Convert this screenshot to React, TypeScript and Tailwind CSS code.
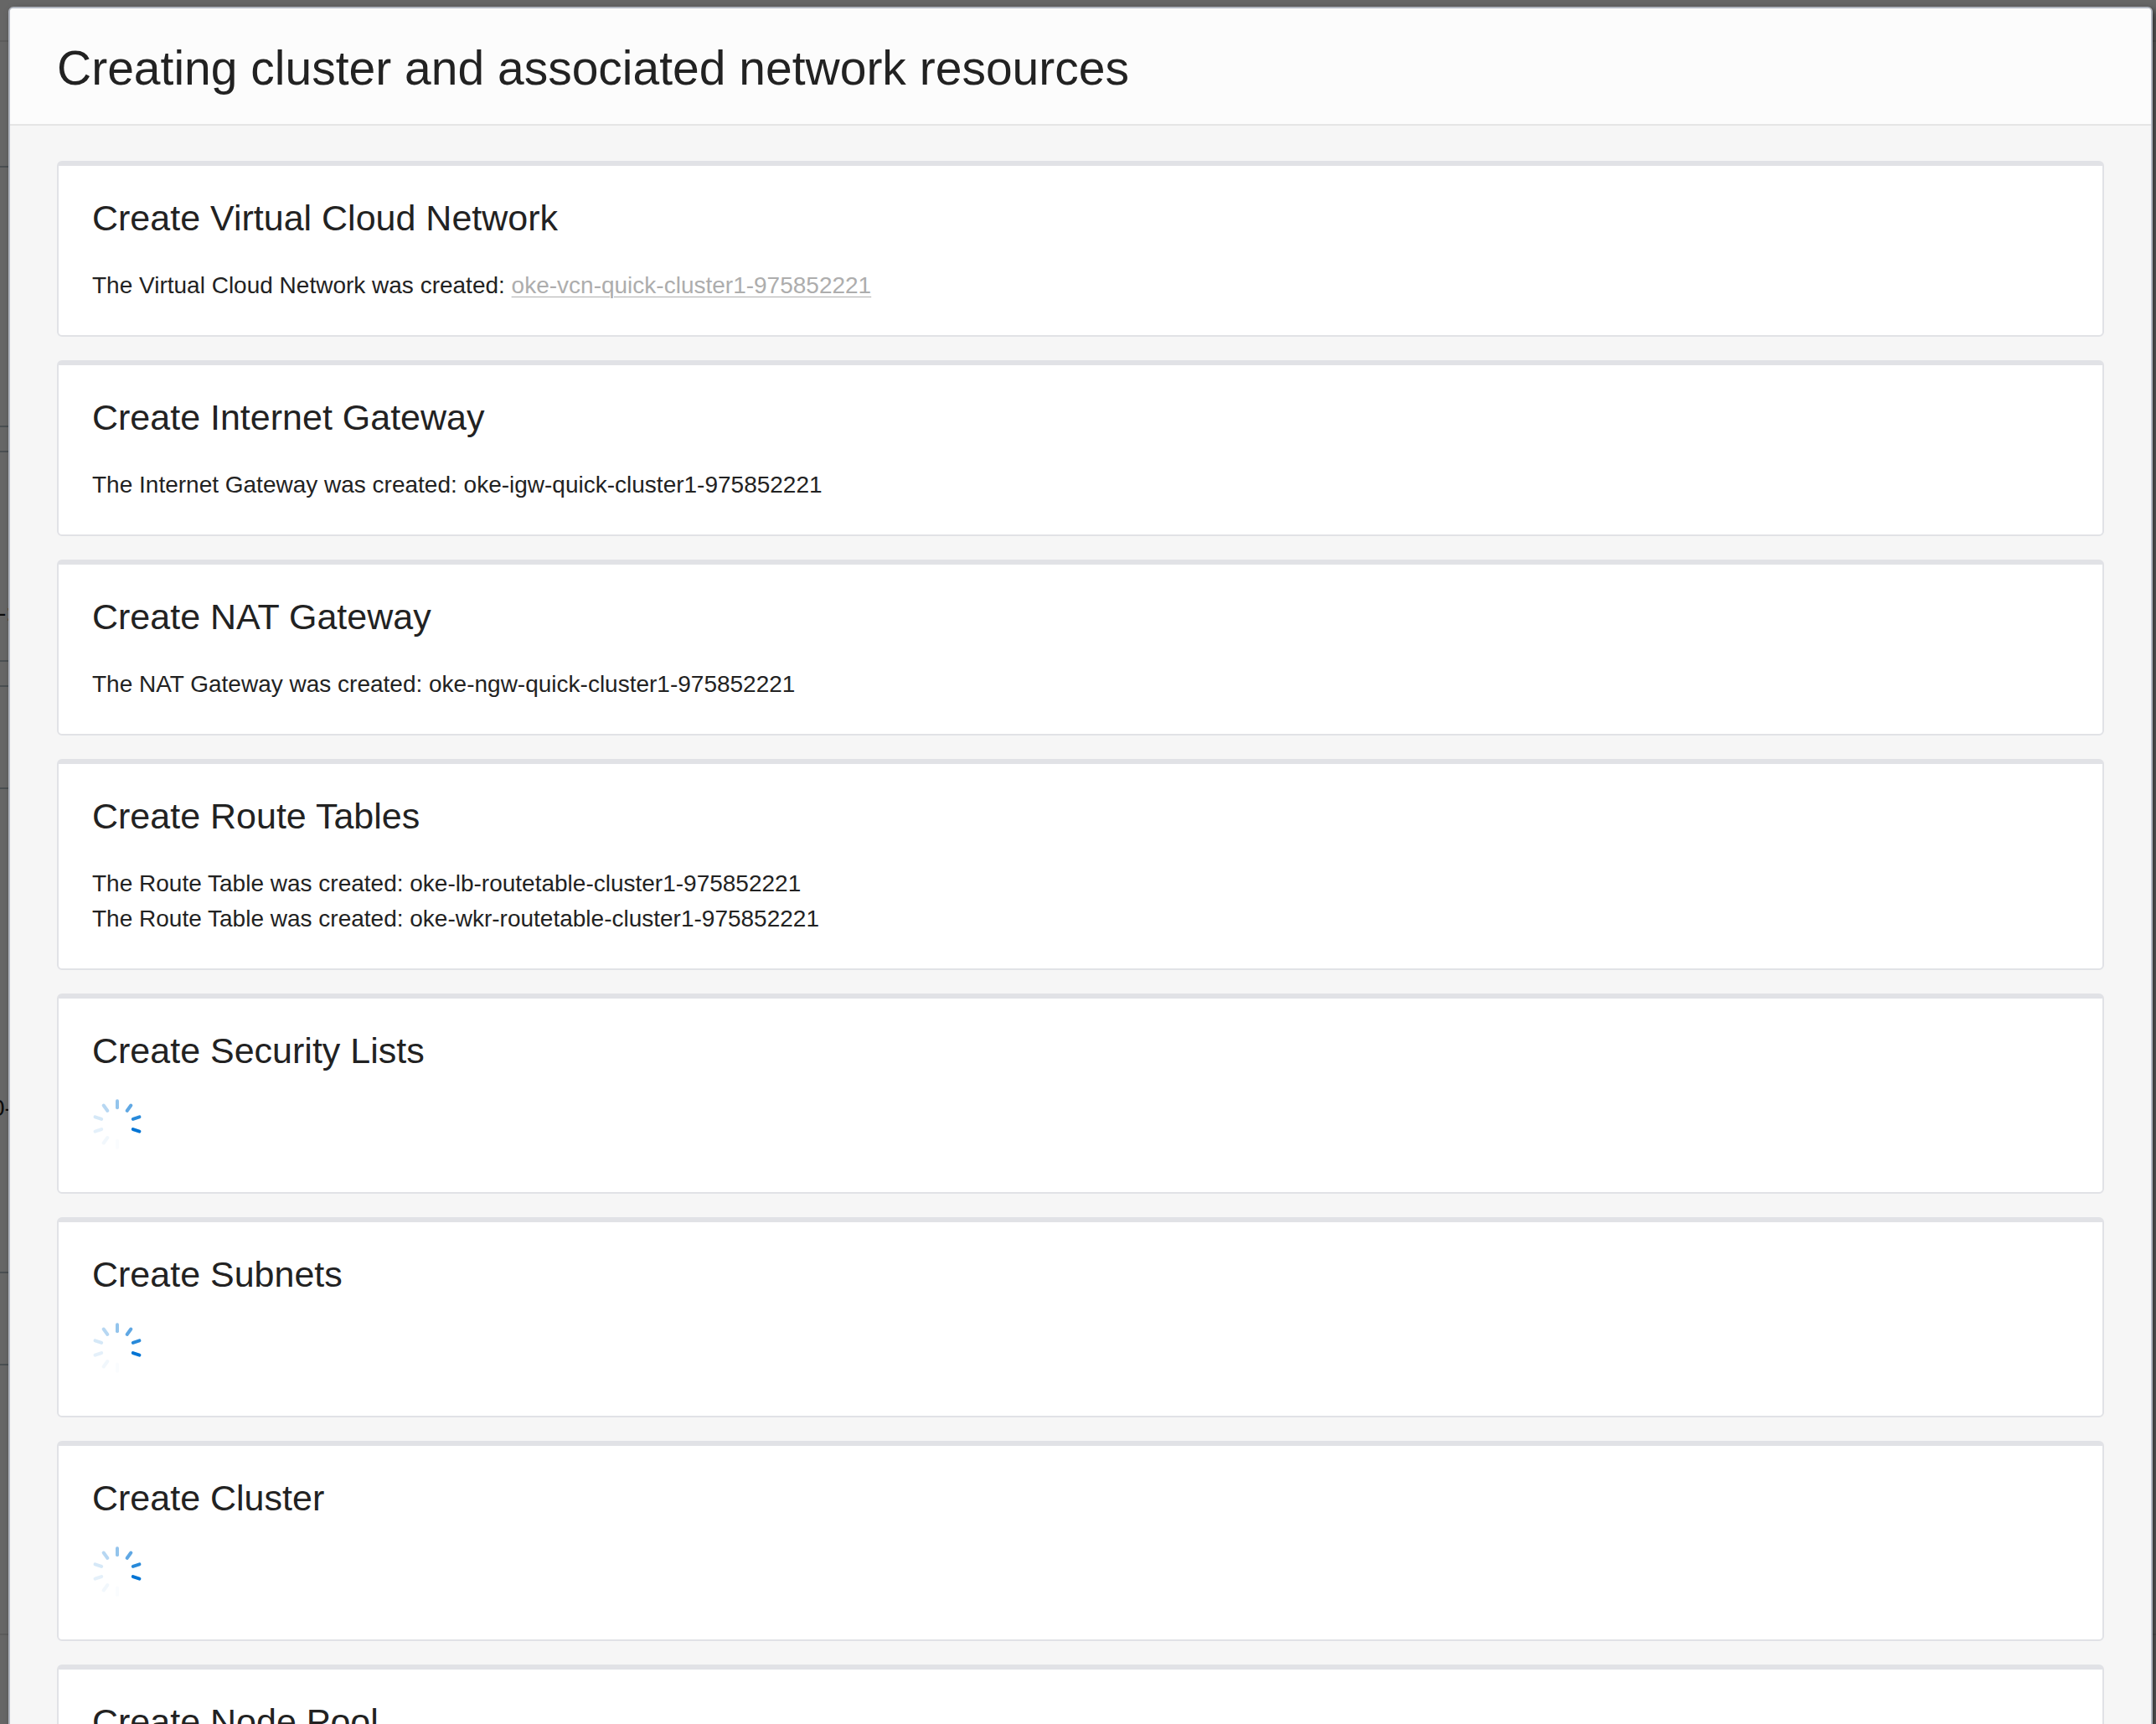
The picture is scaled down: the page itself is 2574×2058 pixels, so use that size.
import React from "react";

type Line = { label: string; name: string; link?: boolean };
type Step = { title: string; lines?: Line[] };

const ID = "975852221";

const steps: Step[] = [
  {
    title: "Create Virtual Cloud Network",
    lines: [{ label: "The Virtual Cloud Network was created:", name: `oke-vcn-quick-cluster1-${ID}`, link: true }],
  },
  {
    title: "Create Internet Gateway",
    lines: [{ label: "The Internet Gateway was created:", name: `oke-igw-quick-cluster1-${ID}` }],
  },
  {
    title: "Create NAT Gateway",
    lines: [{ label: "The NAT Gateway was created:", name: `oke-ngw-quick-cluster1-${ID}` }],
  },
  {
    title: "Create Route Tables",
    lines: [
      { label: "The Route Table was created:", name: `oke-lb-routetable-cluster1-${ID}` },
      { label: "The Route Table was created:", name: `oke-wkr-routetable-cluster1-${ID}` },
    ],
  },
  { title: "Create Security Lists" },
  { title: "Create Subnets" },
  { title: "Create Cluster" },
  { title: "Create Node Pool" },
];

/* Ten spokes, clockwise from twelve o'clock, with their opacity. */
const spokes = [0.42, 0.62, 0.84, 1, 0, 0.015, 0.05, 0.1, 0.16, 0.28];

function Spinner() {
  return (
    <svg role="img" aria-label="In progress" viewBox="0 0 60 60" className="block h-[60px] w-[60px]">
      {spokes.map((opacity, i) => (
        <line
          key={i}
          x1="30"
          y1="2.2"
          x2="30"
          y2="10.2"
          stroke="#0074d4"
          strokeWidth="4"
          strokeLinecap="round"
          opacity={opacity}
          transform={`rotate(${i * 36} 30 30)`}
        />
      ))}
    </svg>
  );
}

function StepCard({ title, lines }: Step) {
  return (
    <section className="rounded-md border-2 border-t-6 border-[#e1e2e6] bg-white px-10 pt-8 pb-[38px]">
      <h2 className="text-[43px] leading-[60px]">{title}</h2>
      {lines ? (
        <div className="mt-[30px] text-[28px] leading-[42px]">
          {lines.map((line) => (
            <p key={line.name}>
              {line.label}{" "}
              {line.link ? (
                <a href="#vcn" className="text-[#adadad] underline decoration-1 underline-offset-4">
                  {line.name}
                </a>
              ) : (
                line.name
              )}
            </p>
          ))}
        </div>
      ) : (
        <div className="mt-7 pb-[13px]">
          <Spinner />
        </div>
      )}
    </section>
  );
}

/* Rules of the page that lies dimmed behind the dialog. */
const rules = [
  { top: 48, faint: true },
  { top: 198 },
  { top: 508 },
  { top: 538 },
  { top: 788 },
  { top: 818 },
  { top: 940 },
  { top: 1518 },
  { top: 1628 },
  { top: 1950, faint: true },
];

function Backdrop() {
  return (
    <div aria-hidden="true" className="absolute inset-0 overflow-hidden text-[28px] leading-8 text-[#0c0c0c]">
      {rules.map((rule) => (
        <div
          key={rule.top}
          className={rule.faint ? "absolute inset-x-0 h-0.5 bg-[#5c5c5c]" : "absolute left-0 h-0.5 w-3 bg-[#4a4f52]"}
          style={{ top: rule.top }}
        />
      ))}
      <span className="absolute top-[716px] -left-0.5">-:</span>
      <span className="absolute top-[1307px] -left-2.5">0-</span>
    </div>
  );
}

export default function App() {
  return (
    <div className="relative h-screen overflow-hidden bg-[#666666] pt-2 pr-1 pl-2.5 font-['Liberation_Sans',Arial,sans-serif] text-[#222222]">
      <Backdrop />
      <div
        role="dialog"
        aria-labelledby="dialog-title"
        className="relative rounded-md border-2 border-[#b2b7c1] bg-[#f6f6f6] shadow-[4px_4px_8px_rgba(0,0,0,0.5)]"
      >
        <header className="rounded-t-sm border-b-2 border-[#e5e5e5] bg-[#fcfcfc] px-14 pt-[34px] pb-[30px]">
          <h1 id="dialog-title" className="text-[57px] leading-[74px]">
            Creating cluster and associated network resources
          </h1>
        </header>
        <main className="flex flex-col gap-7 px-14 py-[42px]">
          {steps.map((step) => (
            <StepCard key={step.title} {...step} />
          ))}
        </main>
      </div>
    </div>
  );
}
